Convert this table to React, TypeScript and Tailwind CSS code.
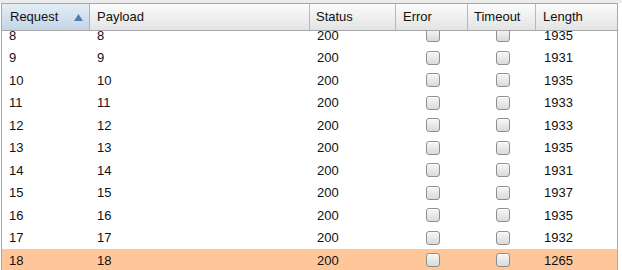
import React from "react";

const rows = [
  { r: 8, s: 200, l: 1935 },
  { r: 9, s: 200, l: 1931 },
  { r: 10, s: 200, l: 1935 },
  { r: 11, s: 200, l: 1933 },
  { r: 12, s: 200, l: 1933 },
  { r: 13, s: 200, l: 1935 },
  { r: 14, s: 200, l: 1931 },
  { r: 15, s: 200, l: 1937 },
  { r: 16, s: 200, l: 1935 },
  { r: 17, s: 200, l: 1932 },
  { r: 18, s: 200, l: 1265 },
];

function Check() {
  return (
    <div className="w-[14px] h-[14px] rounded-[3px] border border-[#8e8f8f] bg-gradient-to-b from-[#f7f7f7] to-[#d9dadb] shadow-[inset_0_1px_0_#ffffff]" />
  );
}

export default function App() {
  return (
    <div
      className="w-[622px] h-[270px] overflow-hidden bg-white text-[13px] text-[#111]"
      style={{ fontFamily: '"Liberation Sans", Arial, sans-serif' }}
    >
      <div className="h-[3px] bg-[#ececec]" />
      <div className="ml-[1px] w-[617px] h-[267px] border-l border-r border-[#a9a9a9] flex flex-col">
        <div className="h-[28px] flex border-t border-b border-[#a7a7a7] shrink-0">
          <div className="w-[88px] flex items-center justify-between pl-[8px] pr-[6px] border-r border-[#b0b0b0] bg-gradient-to-b from-[#e4edf5] to-[#c3d5e6]">
            <span>Request</span>
            <svg width="9" height="7" viewBox="0 0 9 7">
              <polygon points="4.5,0 9,7 0,7" fill="#4f7fae" />
            </svg>
          </div>
          <div className="w-[220px] flex items-center pl-[7px] border-r border-[#b8b8b8] bg-gradient-to-b from-[#fbfbfb] to-[#e2e3e4]">Payload</div>
          <div className="w-[86px] flex items-center pl-[6px] border-r border-[#b8b8b8] bg-gradient-to-b from-[#fbfbfb] to-[#e2e3e4]">Status</div>
          <div className="w-[72px] flex items-center pl-[7px] border-r border-[#b8b8b8] bg-gradient-to-b from-[#fbfbfb] to-[#e2e3e4]">Error</div>
          <div className="w-[68px] flex items-center pl-[6px] border-r border-[#b8b8b8] bg-gradient-to-b from-[#fbfbfb] to-[#e2e3e4]">Timeout</div>
          <div className="flex-1 flex items-center pl-[7px] bg-gradient-to-b from-[#fbfbfb] to-[#e2e3e4]">Length</div>
        </div>
        <div className="flex-1 overflow-hidden">
          <div className="mt-[-7px]">
            {rows.map((row) => (
              <div
                key={row.r}
                className={
                  "h-[22.5px] flex items-center " +
                  (row.r === 18 ? "bg-[#ffc699]" : "bg-white")
                }
              >
                <div className="w-[88px] pl-[7px]">{row.r}</div>
                <div className="w-[221px] pl-[7px]">{row.r}</div>
                <div className="w-[86px] pl-[6px]">{row.s}</div>
                <div className="w-[72px] flex justify-center pr-[1px]">
                  <Check />
                </div>
                <div className="w-[68px] flex justify-center">
                  <Check />
                </div>
                <div className="flex-1 pl-[7px]">{row.l}</div>
              </div>
            ))}
          </div>
        </div>
      </div>
    </div>
  );
}
